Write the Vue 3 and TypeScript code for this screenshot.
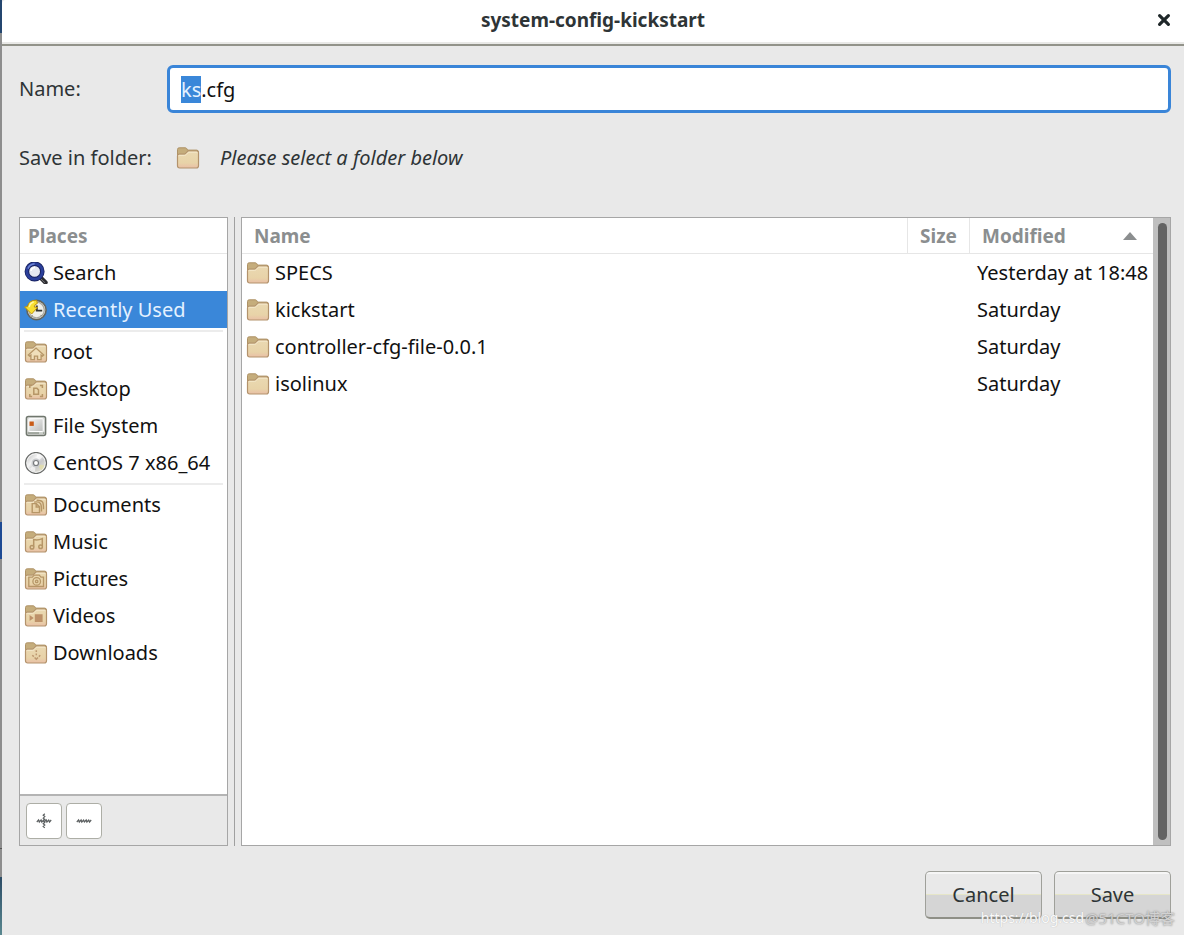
<script setup lang="ts">
import { onMounted, ref } from 'vue'

interface Place {
  label: string
  icon: string
}

interface Entry {
  name: string
  size: string
  modified: string
}

const placeGroups: Place[][] = [
  [
    { label: 'Search', icon: 'search' },
    { label: 'Recently Used', icon: 'recent' },
  ],
  [
    { label: 'root', icon: 'home' },
    { label: 'Desktop', icon: 'desktop' },
    { label: 'File System', icon: 'drive' },
    { label: 'CentOS 7 x86_64', icon: 'disc' },
  ],
  [
    { label: 'Documents', icon: 'documents' },
    { label: 'Music', icon: 'music' },
    { label: 'Pictures', icon: 'pictures' },
    { label: 'Videos', icon: 'videos' },
    { label: 'Downloads', icon: 'downloads' },
  ],
]

const entries: Entry[] = [
  { name: 'SPECS', size: '', modified: 'Yesterday at 18:48' },
  { name: 'kickstart', size: '', modified: 'Saturday' },
  { name: 'controller-cfg-file-0.0.1', size: '', modified: 'Saturday' },
  { name: 'isolinux', size: '', modified: 'Saturday' },
]

const folderIcons = ['home', 'desktop', 'documents', 'music', 'pictures', 'videos', 'downloads']

const fileName = ref('ks.cfg')
const activePlace = ref('Recently Used')
const nameInput = ref<HTMLInputElement | null>(null)

onMounted(() => {
  nameInput.value?.focus()
  nameInput.value?.setSelectionRange(0, fileName.value.lastIndexOf('.'))
})
</script>

<template>
  <div class="screen">
    <svg class="defs" width="0" height="0" aria-hidden="true">
      <defs>
        <linearGradient id="paper" x1="0" y1="0" x2="0" y2="1">
          <stop offset="0" stop-color="#ead9b2" />
          <stop offset="0.7" stop-color="#e8d3a8" />
          <stop offset="1" stop-color="#e9bfa6" />
        </linearGradient>
        <linearGradient id="metal" x1="0" y1="0" x2="1" y2="1">
          <stop offset="0" stop-color="#f7f7f7" />
          <stop offset="1" stop-color="#b9bbb9" />
        </linearGradient>
        <linearGradient id="silver" x1="0" y1="0" x2="1" y2="1">
          <stop offset="0" stop-color="#bdbdbd" />
          <stop offset="0.35" stop-color="#f4f4f4" />
          <stop offset="0.6" stop-color="#c9c9cb" />
          <stop offset="1" stop-color="#ecebd8" />
        </linearGradient>
        <symbol id="folder" viewBox="0 0 24 22">
          <path d="M1.5 12V2.5q0-1.7 1.7-1.7h6.1q1 0 1.5.9l.8 1.4h9q1.9 0 1.9 1.9v7z" fill="#c5ad7c" stroke="#ae9266" />
          <path
            d="M1.5 9q0-1.8 1.8-1.8h4.9q.9 0 1.4-.6l1.8-2q.5-.6 1.4-.6h7.9q1.8 0 1.8 1.8v13q0 2.2-2.2 2.2H3.7q-2.2 0-2.2-2.2z"
            fill="url(#paper)"
            stroke="#b3936c"
            stroke-width="1.2"
          />
          <path d="M2.6 9.2q0-.9.9-.9h5.2q.8 0 1.4-.7l1.8-2q.4-.4 1-.4h7.4q1 0 1 1" fill="none" stroke="#f6ebcf" stroke-width=".9" />
        </symbol>
      </defs>
    </svg>

    <div class="backdrop"></div>

    <form class="dialog" @submit.prevent>
      <header class="titlebar">
        <h1 class="title">system-config-kickstart</h1>
        <button class="close" type="button" aria-label="Close">
          <svg width="14" height="14" viewBox="0 0 14 14">
            <path d="M2.6 2.6l8.8 8.8M11.4 2.6l-8.8 8.8" stroke="#1f2729" stroke-width="3.2" stroke-linecap="round" />
          </svg>
        </button>
      </header>

      <main class="content">
        <div class="fields">
          <label class="field-label" for="file-name">Name:</label>
          <input id="file-name" ref="nameInput" v-model="fileName" class="entry" type="text" autocomplete="off" spellcheck="false" />
          <span class="field-label">Save in folder:</span>
          <span class="folder-choice">
            <svg class="icon" viewBox="0 0 24 22"><use href="#folder" /></svg>
            <em>Please select a folder below</em>
          </span>
        </div>

        <div class="browser">
          <aside class="places">
            <h2 class="places-head">Places</h2>
            <nav class="places-list">
              <ul v-for="(group, g) in placeGroups" :key="g" class="group">
                <li v-for="place in group" :key="place.label">
                  <button
                    class="place"
                    :class="{ active: place.label === activePlace }"
                    type="button"
                    @click="activePlace = place.label"
                  >
                    <svg class="icon" viewBox="0 0 24 22">
                      <use v-if="folderIcons.includes(place.icon)" href="#folder" />
                      <g v-if="place.icon === 'search'">
                        <path d="M16.5 15.5l5 5" stroke="#2c2c30" stroke-width="4.4" stroke-linecap="round" />
                        <path d="M17 17l3.8 3.6" stroke="#77777c" stroke-width="1" stroke-linecap="round" />
                        <circle cx="10.6" cy="9.4" r="7.7" fill="#e6e8f1" stroke="#182260" stroke-width="4.6" />
                        <circle cx="10.6" cy="9.4" r="7.8" fill="none" stroke="#2b3f9a" stroke-width="2.8" />
                        <path d="M4 6.6q1.9-4.4 6.6-4.8" fill="none" stroke="#6c83d4" stroke-width="1.5" />
                        <path d="M7 9q.4-3.2 4-3.5" fill="none" stroke="#fff" stroke-width="1.6" />
                      </g>
                      <g v-else-if="place.icon === 'recent'">
                        <circle cx="12.5" cy="11" r="9.6" fill="#e7e6df" stroke="#62645d" stroke-width="1.6" />
                        <circle cx="12.5" cy="11" r="7.8" fill="#efefe9" stroke="#aaa9a0" stroke-width="1.3" />
                        <path d="M12.8 6.4v5.2h5.4" fill="none" stroke="#32342f" stroke-width="1.9" />
                        <path d="M7.5 17.6l1.2-1M17.4 16.8l-.9-.9" stroke="#77776f" stroke-width="1" />
                        <path
                          d="M12.6 1.2Q4.6 1 3.6 7.6L.6 8l7 7 6-6.6-3.4-.4q.2-2.6 3.2-3.6z"
                          fill="#f7df31"
                          stroke="#bd9410"
                          stroke-width="1"
                          stroke-linejoin="round"
                        />
                        <path d="M5.2 8.2q.6-4 4.5-5.2" fill="none" stroke="#fff7a2" stroke-width="1.4" />
                      </g>
                      <g v-else-if="place.icon === 'home'" fill="#f0dfba" stroke="#b69667" stroke-width="1.3">
                        <path d="M4.3 14.1l7.7-7 7.7 7-1.2 1-1.4-1v4.6h-3.5v-3.5h-3.2v3.5H6.9v-4.6l-1.4 1z" />
                      </g>
                      <g v-else-if="place.icon === 'desktop'" fill="none" stroke="#b69667" stroke-width="1.5">
                        <path d="M9.8 10.2h3.1l1.6 1.7v4.4H9.8z" />
                        <path d="M5.8 10V7.6h2.3M15.9 7.6h2.5V10M5.8 16v2.5h2.3M15.9 18.5h2.5V16" />
                      </g>
                      <g v-else-if="place.icon === 'drive'">
                        <rect x="2.4" y="1.4" width="19.2" height="19.2" rx="2" fill="#dedfdd" stroke="#70776e" stroke-width="1.5" />
                        <rect x="4.8" y="3.7" width="14.4" height="12.8" rx="1" fill="url(#metal)" stroke="#fff" stroke-width="1" />
                        <path d="M3.5 18.1h17" stroke="#a0a69e" stroke-width="2" />
                        <path d="M15 18h4" stroke="#f1f3f0" stroke-width="1" />
                        <path d="M5.5 6.5h4.3v4.4H5.5z" fill="#c95c18" />
                      </g>
                      <g v-else-if="place.icon === 'disc'">
                        <circle cx="12" cy="11" r="10.5" fill="#f4f4f4" stroke="#686a68" stroke-width="1.2" />
                        <circle cx="12" cy="11" r="8.8" fill="url(#silver)" />
                        <path d="M12 11l1-8.7q3.4.3 5.5 2.6zM12 11l-1 8.6q-3.3-.3-5.2-2.5z" fill="#fff" opacity=".65" />
                        <path d="M12.6 11.8l7.8 1.6q-1 3.2-3.2 4.9z" fill="#e2dda8" opacity=".8" />
                        <circle cx="12" cy="11" r="4.5" fill="#c9cbce" />
                        <circle cx="12" cy="11" r="2.5" fill="#fff" stroke="#787a7d" stroke-width="1.2" />
                      </g>
                      <g v-else-if="place.icon === 'documents'" fill="none" stroke="#b69667" stroke-width="1.4">
                        <path d="M8.2 9.6h4.1l3.2 3.3v5.7H8.2z" />
                        <path d="M12.2 9.8v3.2h3.2M10.1 8.1q4.5-.9 6.3 1.4 1.2 1.6 1.1 7.9M12.6 6.3q4.6-.2 6 1.8.9 1.5.9 7.2" />
                      </g>
                      <g v-else-if="place.icon === 'music'" fill="none" stroke="#b69667" stroke-width="1.5">
                        <path d="M9.7 15.8V8.6q4.2 1 8.6-1v7.4" />
                        <circle cx="8" cy="16.2" r="1.8" />
                        <circle cx="16.6" cy="15.8" r="1.8" />
                      </g>
                      <g v-else-if="place.icon === 'pictures'" fill="none" stroke="#b69667" stroke-width="1.3">
                        <path d="M4.8 9.2h3.6l1.8-2.1h5l1.8 2.1h2.5v9.3H4.8z" />
                        <circle cx="12.7" cy="13.4" r="3.8" />
                        <circle cx="12.7" cy="13.4" r="1.2" />
                      </g>
                      <g v-else-if="place.icon === 'videos'" fill="#bd9169">
                        <path d="M10.8 9.2h7.8v7.7h-7.8zM5.6 10.1l4.1 2.9-4.1 2.9z" />
                      </g>
                      <g v-else-if="place.icon === 'downloads'" fill="none" stroke="#bd9870" stroke-width="1.5">
                        <path d="M12.3 8.2v1.7M12.3 11.6v1.6M8.3 13.2l1.5 1.4M16.3 13.2l-1.5 1.4M10.6 15.4l1.7 1.8 1.7-1.8" />
                      </g>
                    </svg>
                    <span>{{ place.label }}</span>
                  </button>
                </li>
              </ul>
            </nav>
            <div class="places-tools">
              <button class="tool" type="button" aria-label="Add bookmark">
                <svg width="16" height="16" viewBox="0 0 16 16" fill="none" stroke="#5c6061" stroke-width="1.2">
                  <path d="M.8 9l1.8-2 .7 2 1.8-2 .7 2 1.8-2 .8 2 1.8-2 .7 2 1.8-2 .8 2 1.7-2M8.8.8l-1.6 1.5 1.6 1.3-1.6 1.5 1.6 1.3-1.6 1.5 1.6 1.3-1.6 1.5 1.6 1.3-1.6 1.5 1.6 1.4" />
                </svg>
              </button>
              <button class="tool" type="button" aria-label="Remove bookmark">
                <svg width="16" height="16" viewBox="0 0 16 16" fill="none" stroke="#5c6061" stroke-width="1.2">
                  <path d="M.8 9l1.8-2 .7 2 1.8-2 .7 2 1.8-2 .8 2 1.8-2 .7 2 1.8-2 .8 2 1.7-2" />
                </svg>
              </button>
            </div>
          </aside>

          <div class="divider"></div>

          <section class="files">
            <div class="files-view">
              <table class="file-table">
                <colgroup>
                  <col />
                  <col class="col-size" />
                  <col class="col-modified" />
                </colgroup>
                <thead>
                  <tr>
                    <th scope="col">Name</th>
                    <th scope="col">Size</th>
                    <th scope="col" aria-sort="ascending">
                      <span class="sorted">
                        Modified
                        <svg width="14" height="8" viewBox="0 0 14 8"><path d="M0 8l7-8 7 8z" fill="#8b8e8f" /></svg>
                      </span>
                    </th>
                  </tr>
                </thead>
                <tbody>
                  <tr v-for="entry in entries" :key="entry.name">
                    <td>
                      <span class="file">
                        <svg class="icon" viewBox="0 0 24 22"><use href="#folder" /></svg>
                        {{ entry.name }}
                      </span>
                    </td>
                    <td>{{ entry.size }}</td>
                    <td>{{ entry.modified }}</td>
                  </tr>
                </tbody>
              </table>
            </div>
            <div class="scroll-track"><div class="scroll-thumb"></div></div>
          </section>
        </div>

        <footer class="actions">
          <button class="action" type="button">Cancel</button>
          <button class="action" type="submit">Save</button>
        </footer>
      </main>
    </form>

    <div class="marks">
      <span>https://blog.csd</span>
      <span class="mark-site">@51CTO博客</span>
    </div>
  </div>
</template>

<style>
body {
  margin: 0;
  background: #e9e9e9;
}
</style>

<style scoped>
* {
  box-sizing: border-box;
}

.screen {
  position: relative;
  display: grid;
  grid-template-columns: 2px 1fr;
  min-height: 100vh;
  overflow: hidden;
  font-family: 'Noto Sans', 'Open Sans', 'Noto Sans CJK SC', sans-serif;
  font-size: 20px;
  line-height: 28px;
  color: #2e3436;
}

.screen button,
.screen input {
  font: inherit;
  color: inherit;
}

.defs {
  position: absolute;
}

.backdrop {
  background: linear-gradient(
    #24466f 0 33px,
    #8e8e8e 33px 522px,
    #1d4a94 522px 559px,
    #8e8e8e 559px 848px,
    #555 848px 849px,
    #8e8e8e 849px 877px,
    #2c4c66 877px,
    #5a8890
  );
}

.dialog {
  display: flex;
  flex-direction: column;
  min-width: 0;
  background: #e9e9e9;
  border-top-left-radius: 4px;
}

.titlebar {
  display: grid;
  grid-template-columns: 40px 1fr 40px;
  align-items: center;
  height: 46px;
  padding-bottom: 4px;
  background: #fff;
  border-bottom: 2px solid #92938a;
  border-top-left-radius: 4px;
  box-shadow: inset 0 -2px #e9e9e7;
}

.title {
  grid-column: 2;
  margin: 0;
  font-size: 19px;
  font-weight: 700;
  text-align: center;
}

.close {
  display: grid;
  place-items: center;
  height: 32px;
  padding: 0;
  background: none;
  border: 0;
}

.content {
  display: flex;
  flex: 1;
  flex-direction: column;
  padding: 19px 13px 16px 17px;
}

.fields {
  display: grid;
  grid-template-columns: 148px 1fr;
  grid-template-rows: 48px 42px;
  align-items: center;
  margin-bottom: 38px;
  row-gap: 24px;
}

.entry {
  width: 100%;
  height: 48px;
  padding: 0 11px;
  background: #fff;
  border: 3px solid #3a85d8;
  border-radius: 6px;
  outline: 0;
}

.screen .entry {
  color: #111;
}

.entry::selection {
  color: #e4f1ff;
  background: #3a87d9;
}

.folder-choice {
  display: flex;
  gap: 20px;
  align-items: center;
  padding-left: 9px;
}

.icon {
  flex: none;
  width: 24px;
  height: 22px;
}

.browser {
  display: grid;
  flex: 1;
  grid-template-columns: 209px 1px 1fr;
  column-gap: 6px;
  color: #111;
}

.places,
.files {
  background: #fff;
  border: 1px solid #a6a6a6;
}

.places {
  display: flex;
  flex-direction: column;
}

.places-head {
  height: 36px;
  margin: 0;
  padding: 0 8px;
  font-size: 19px;
  font-weight: 700;
  line-height: 36px;
  color: #8b8e8f;
  border-bottom: 1px solid #e6e6e6;
}

.places-list {
  flex: 1;
}

.group {
  margin: 0;
  padding: 0;
  list-style: none;
}

.group + .group::before {
  display: block;
  height: 2px;
  margin: 2px 4px 1px;
  content: '';
  background: #ececec;
}

.place {
  display: flex;
  gap: 5px;
  align-items: center;
  width: 100%;
  height: 37px;
  padding: 0 4px;
  text-align: left;
  white-space: nowrap;
  background: none;
  border: 0;
}

.screen .place.active {
  color: #e4f1ff;
  background: #3a87d9;
}

.places-tools {
  display: flex;
  gap: 4px;
  padding: 7px 6px 6px;
  background: #e9e9e9;
  border-top: 2px solid #b4b4b4;
}

.tool {
  display: grid;
  place-items: center;
  width: 36px;
  height: 36px;
  padding: 0;
  background: #fff;
  border: 1px solid #adaea6;
  border-radius: 4px;
}

.divider {
  background: #a0a0a0;
}

.files {
  display: flex;
  min-width: 0;
}

.files-view {
  flex: 1;
  min-width: 0;
}

.file-table {
  width: 100%;
  table-layout: fixed;
  border-spacing: 0;
}

.col-size {
  width: 62px;
}

.col-modified {
  width: 184px;
}

.file-table th {
  height: 36px;
  padding: 0 12px;
  font-size: 19px;
  font-weight: 700;
  color: #8b8e8f;
  text-align: left;
  border-bottom: 1px solid #e6e6e6;
}

.file-table th + th {
  border-left: 1px solid #e6e6e6;
}

.sorted {
  display: flex;
  align-items: center;
  justify-content: space-between;
  padding-right: 4px;
}

.file-table td {
  height: 37px;
  padding: 0 4px;
  white-space: nowrap;
}

.file-table td:last-child {
  padding: 0 0 0 8px;
}

.file {
  display: flex;
  gap: 5px;
  align-items: center;
}

.scroll-track {
  display: flex;
  width: 17px;
  padding: 5px 3px 5px 5px;
  background: #bfbfbf;
}

.scroll-thumb {
  flex: 1;
  background: #636363;
  border-radius: 5px;
}

.actions {
  display: flex;
  gap: 12px;
  justify-content: flex-end;
  padding-top: 25px;
}

.action {
  width: 117px;
  height: 48px;
  padding: 0;
  background: linear-gradient(#f6f6f6 0 2px, #e9e9e9 2px 22px, #e6e6c8 22px 23px, #d5d5d5 23px);
  border: 1px solid #9fa09a;
  border-bottom: 2px solid #8e8f86;
  border-radius: 5px;
}

.marks {
  position: absolute;
  right: 9px;
  bottom: 7px;
  display: flex;
  gap: 1px;
  font-size: 14px;
  line-height: 20px;
  color: #fafafa;
  text-shadow: 0 0 1px #aaa;
  white-space: nowrap;
  pointer-events: none;
}

.mark-site {
  font-size: 15px;
  color: #d2d2d2;
  text-shadow: 0 0 2px #777;
}
</style>
